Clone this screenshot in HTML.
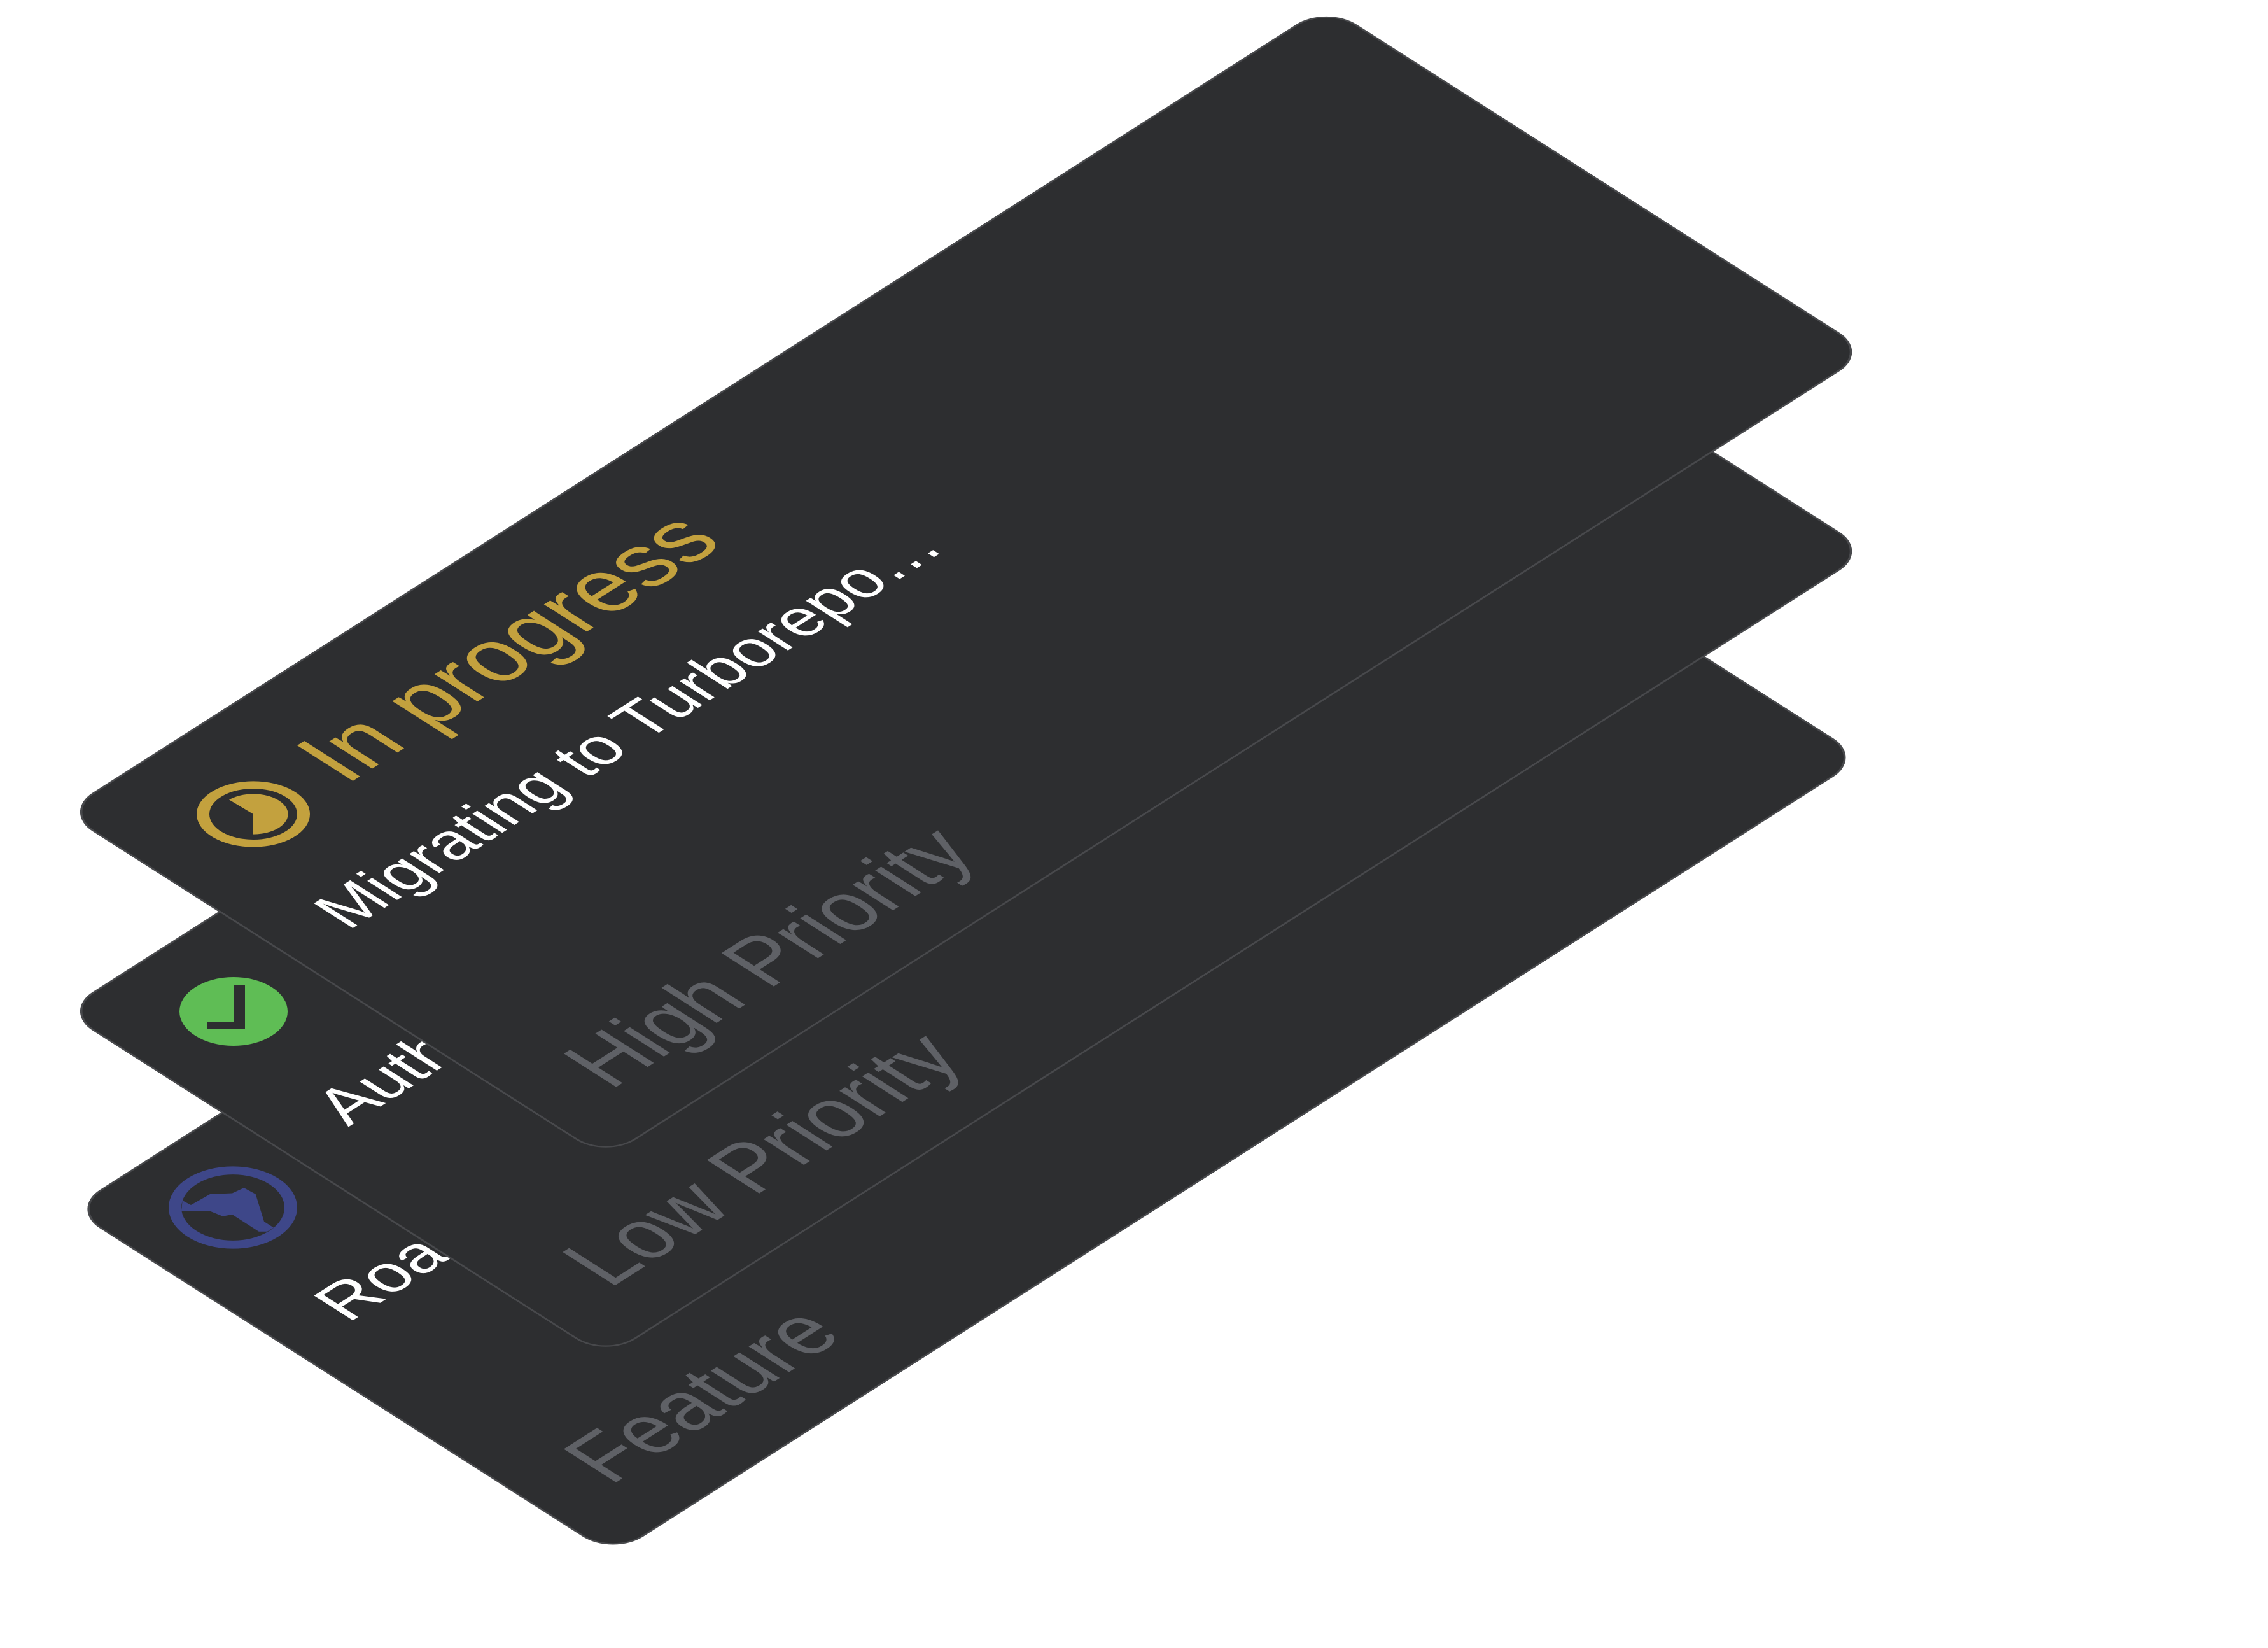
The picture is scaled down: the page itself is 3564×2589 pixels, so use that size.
<!DOCTYPE html>
<html><head><meta charset="utf-8"><style>
html,body{margin:0;padding:0;background:#fff;}
svg{display:block}
text{font-family:"Liberation Sans",sans-serif}
</style></head><body>
<svg width="3564" height="2589" viewBox="0 0 3564 2589" xmlns="http://www.w3.org/2000/svg">
<!-- bottom card -->
<g transform="scale(2.2846) matrix(0.843,-0.538,0.843,0.538,60,833)">
  <rect x="-5" y="-8" width="1019" height="442" rx="24" fill="#2d2e30" stroke="#48494c" stroke-width="1.3"/>
  <text x="35" y="178" font-size="46" fill="#ffffff">Roadmap planning</text>
  <text x="38" y="389" font-size="62" fill="#5f6166" textLength="191" lengthAdjust="spacingAndGlyphs">Feature</text>
</g>
<!-- middle card -->
<g transform="scale(2.2846) matrix(0.843,-0.538,0.843,0.538,55,697)">
  <rect x="-5" y="-8" width="1030" height="442" rx="24" fill="#2d2e30" stroke="#48494c" stroke-width="1.3"/>
  <text x="37" y="182" font-size="46" fill="#ffffff">Authentication flow</text>
  <text x="40" y="392" font-size="62" fill="#5f6166" textLength="291" lengthAdjust="spacingAndGlyphs">Low Priority</text>
</g>
<!-- top card -->
<g transform="scale(2.2846) matrix(0.843,-0.538,0.843,0.538,55,560)">
  <rect x="-5" y="-8" width="1030" height="442" rx="24" fill="#2d2e30" stroke="#48494c" stroke-width="1.3"/>
  <text x="127" y="90" font-size="66" fill="#c3a13e" textLength="309" lengthAdjust="spacingAndGlyphs">In progress</text>
  <text x="35" y="184" font-size="46" fill="#ffffff" textLength="488" lengthAdjust="spacingAndGlyphs">Migrating to Turborepo…</text>
  <text x="40" y="393" font-size="62" fill="#5f6166" textLength="300" lengthAdjust="spacingAndGlyphs">High Priority</text>
</g>
<!-- yellow icon -->
<g transform="translate(398,1279) scale(1,0.58)">
  <circle r="79" fill="none" stroke="#c3a13e" stroke-width="20"/>
  <path d="M0,0 L-38,-39 A54.5,54.5 0 1 1 0,54.5 Z" fill="#c3a13e"/>
</g>
<!-- green icon -->
<ellipse cx="367" cy="1589" rx="85" ry="54" fill="#5fbd55"/>
<rect x="368" y="1547" width="17" height="69" fill="#2d2e30"/>
<rect x="325" y="1606" width="60" height="10" fill="#2d2e30"/>
<!-- blue icon -->
<g transform="translate(366,1897) scale(1,0.64)">
  <circle r="91" fill="none" stroke="#3e4789" stroke-width="20"/>
</g>
<path d="M286.7,1886 L300,1893 L330,1876 L365,1874.5 L383.3,1866 L401.7,1876 L415,1919 L430,1928.6 L420,1934.7 L406.7,1934.7 L365,1908 L350,1910.7 L330,1902.6 L285,1902.6 Z" fill="#3e4789"/>
</svg>
</body></html>
